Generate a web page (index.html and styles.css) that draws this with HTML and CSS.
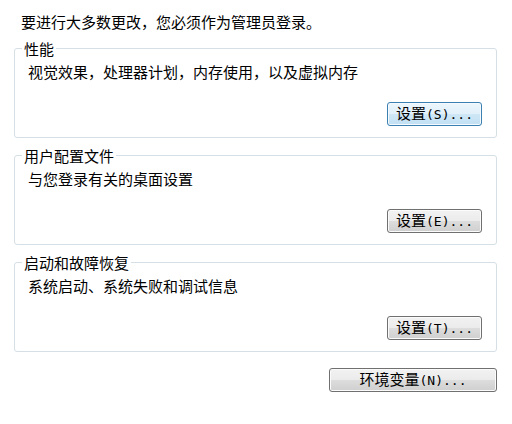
FILE: index.html
```html
<!DOCTYPE html>
<html lang="zh-CN">
<head>
<meta charset="utf-8">
<title>系统属性 - 高级</title>
<link rel="stylesheet" href="styles.css">
</head>
<body>
<div class="page">
  <p class="notice">要进行大多数更改，您必须作为管理员登录。</p>

  <fieldset class="group">
    <legend class="group-title">性能</legend>
    <p class="desc">视觉效果，处理器计划，内存使用，以及虚拟内存</p>
    <div class="actions"><button class="btn btn-default">设置<span class="key">(S)...</span></button></div>
  </fieldset>

  <fieldset class="group">
    <legend class="group-title">用户配置文件</legend>
    <p class="desc">与您登录有关的桌面设置</p>
    <div class="actions"><button class="btn">设置<span class="key">(E)...</span></button></div>
  </fieldset>

  <fieldset class="group">
    <legend class="group-title">启动和故障恢复</legend>
    <p class="desc">系统启动、系统失败和调试信息</p>
    <div class="actions"><button class="btn">设置<span class="key">(T)...</span></button></div>
  </fieldset>

  <div class="footer">
    <button class="btn btn-wide">环境变量<span class="key">(N)...</span></button>
  </div>
</div>
</body>
</html>
```

FILE: styles.css
```css
html, body {
  margin: 0;
  padding: 0;
  background: #ffffff;
}

body {
  font-family: "Noto Sans CJK SC", "Noto Sans", sans-serif;
  font-size: 15px;
  line-height: 15px;
  color: #000000;
}

.page {
  width: 483px;
  padding: 14px 0 0 14px;
  display: flex;
  flex-direction: column;
}

.notice {
  margin: 0 0 11px 7px;
  line-height: 15px;
}

.group {
  margin: 0 0 9px 0;
  padding: 7px 14px 11px 13px;
  border: 1px solid #d5dfe5;
  border-radius: 3px;
  min-width: 0;
}

.group-title {
  padding: 0 2px;
  margin-left: -6px;
  line-height: 17px;
}

.desc {
  margin: 0;
  line-height: 15px;
}

.actions {
  display: flex;
  justify-content: flex-end;
  margin-top: 23px;
}

.btn {
  box-sizing: border-box;
  width: 95px;
  height: 24px;
  padding: 0;
  border: 1px solid #707070;
  border-radius: 3px;
  background: linear-gradient(#f2f2f2 0%, #ebebeb 50%, #dddddd 50%, #cfcfcf 100%);
  box-shadow: inset 0 0 0 1px #fbfbfb;
  font-family: "Noto Sans CJK SC", "Noto Sans", sans-serif;
  font-size: 15px;
  line-height: 20px;
  color: #000000;
}

.key {
  font-family: "DejaVu Sans Mono", "Liberation Mono", monospace;
  font-size: 13px;
}

.btn-default {
  border-color: #3c7fb1;
  background: linear-gradient(#ecf6fc 0%, #e1f0fa 50%, #cfe7f6 50%, #c1e0f3 100%);
  box-shadow: inset 0 0 0 1px #f4fafd;
}

.footer {
  display: flex;
  justify-content: flex-end;
  margin-top: 7px;
}

.btn-wide {
  width: 168px;
}
```
